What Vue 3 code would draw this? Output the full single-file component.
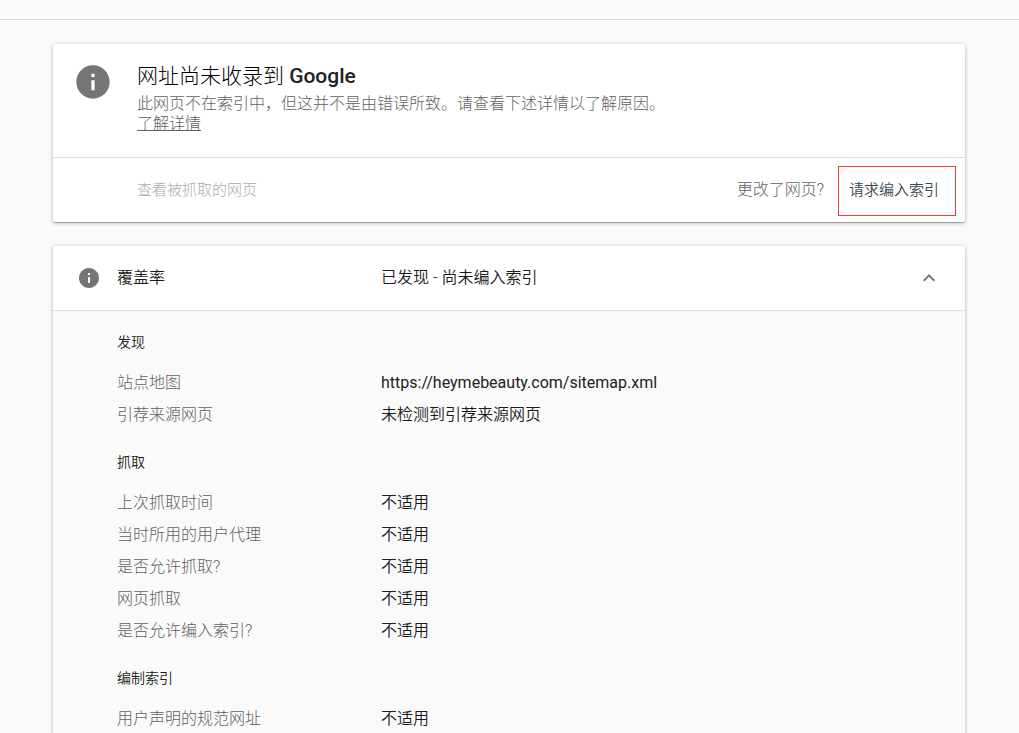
<script setup>
const sections = [
  {
    title: '发现',
    rows: [
      { label: '站点地图', value: 'https://heymebeauty.com/sitemap.xml', url: true },
      { label: '引荐来源网页', value: '未检测到引荐来源网页' },
    ],
  },
  {
    title: '抓取',
    rows: [
      { label: '上次抓取时间', value: '不适用' },
      { label: '当时所用的用户代理', value: '不适用' },
      { label: '是否允许抓取?', value: '不适用' },
      { label: '网页抓取', value: '不适用' },
      { label: '是否允许编入索引?', value: '不适用' },
    ],
  },
  {
    title: '编制索引',
    rows: [{ label: '用户声明的规范网址', value: '不适用' }],
  },
]
</script>

<template>
  <div class="page">
    <header class="topbar"></header>
    <main class="content">
      <section class="card">
        <div class="summary">
          <svg class="info-large" viewBox="0 0 24 24" aria-hidden="true">
            <path d="M12 2C6.48 2 2 6.48 2 12s4.48 10 10 10 10-4.48 10-10S17.52 2 12 2zm1 15h-2v-6h2v6zm0-8h-2V7h2v2z" />
          </svg>
          <div>
            <h1>网址尚未收录到 <b>Google</b></h1>
            <p>此网页不在索引中，但这并不是由错误所致。请查看下述详情以了解原因。</p>
            <a href="#">了解详情</a>
          </div>
        </div>
        <div class="actions">
          <button class="crawled" type="button" disabled>查看被抓取的网页</button>
          <span class="changed">更改了网页?</span>
          <button class="request" type="button">请求编入索引</button>
        </div>
      </section>

      <section class="card">
        <button class="coverage" type="button" aria-expanded="true">
          <svg class="info-small" viewBox="0 0 24 24" aria-hidden="true">
            <path d="M12 2C6.48 2 2 6.48 2 12s4.48 10 10 10 10-4.48 10-10S17.52 2 12 2zm1 15h-2v-6h2v6zm0-8h-2V7h2v2z" />
          </svg>
          <span class="coverage-name">覆盖率</span>
          <span class="coverage-state">已发现 - 尚未编入索引</span>
          <svg class="chevron" viewBox="0 0 24 24" aria-hidden="true">
            <path d="M12 8l-6 6 1.41 1.41L12 10.83l4.59 4.58L18 14z" />
          </svg>
        </button>
        <div class="details">
          <section v-for="s in sections" :key="s.title" class="group">
            <h2>{{ s.title }}</h2>
            <dl>
              <div v-for="r in s.rows" :key="r.label" class="row">
                <dt>{{ r.label }}</dt>
                <dd :class="{ url: r.url }">{{ r.value }}</dd>
              </div>
            </dl>
          </section>
        </div>
      </section>
    </main>
  </div>
</template>

<style>
html {
  height: 100%;
  overflow: hidden;
}
body {
  margin: 0;
  background: #fafafa;
}
</style>

<style scoped>
.page {
  color: #1a1a1a;
  font-family: Roboto, "Noto Sans CJK SC", sans-serif;
  font-size: 16px;
  font-weight: 350;
  line-height: 20px;
}
.topbar {
  height: 19px;
  border-bottom: 1px solid #dadada;
}
.content {
  display: flex;
  flex-direction: column;
  gap: 24px;
  padding: 24px 54px 24px 53px;
}
.card {
  background: #fff;
  border-radius: 2px;
  box-shadow: 0 1px 4px rgba(0, 0, 0, 0.28), 0 1px 1px rgba(0, 0, 0, 0.24);
}
.summary {
  display: flex;
  gap: 24px;
  padding: 18px 20px 23px;
}
.info-large {
  flex: none;
  width: 40px;
  height: 40px;
  fill: #757575;
}
h1 {
  margin: 0 0 4px;
  color: #000;
  font-size: 21px;
  font-weight: 300;
  line-height: 28px;
}
h1 b {
  color: #212121;
  font-weight: 500;
}
p {
  margin: 0;
  color: #616161;
  font-weight: 300;
}
.summary a {
  color: #616161;
  font-weight: 300;
}
button {
  padding: 0;
  border: 0;
  background: none;
  color: inherit;
  font: inherit;
}
.actions {
  display: flex;
  align-items: center;
  height: 64px;
  padding: 0 9px 0 84px;
  border-top: 1px solid #dedede;
}
.crawled {
  color: #aaa;
  font-size: 15px;
  font-weight: 300;
  margin-right: auto;
}
.changed {
  color: #616161;
  font-weight: 300;
}
.request {
  box-sizing: border-box;
  width: 118px;
  height: 50px;
  margin-top: 2px;
  margin-left: 14px;
  padding: 0 6px 2px 0;
  border: 1px solid #f53838;
  color: #37474f;
  font-size: 15px;
}
.coverage {
  display: flex;
  align-items: center;
  width: 100%;
  height: 65px;
  padding: 0 24px;
  border-bottom: 1px solid #dedede;
  text-align: left;
}
.info-small {
  width: 24px;
  height: 24px;
  margin-right: 16px;
  fill: #757575;
}
.coverage-name {
  width: 264px;
}
.chevron {
  width: 24px;
  height: 24px;
  margin-left: auto;
  fill: #757575;
}
.details {
  padding: 15px 64px 24px;
  background: #fafafa;
}
.group {
  margin-bottom: 15px;
}
h2 {
  margin: 0 0 9px;
  font-size: 14px;
  font-weight: 350;
  line-height: 32px;
}
dl {
  margin: 0;
}
.row {
  display: flex;
  line-height: 32px;
}
dt {
  flex: none;
  width: 264px;
  color: #616161;
  font-weight: 300;
}
dd {
  margin: 0;
}
.url {
  color: #212121;
  font-weight: 400;
}
</style>
